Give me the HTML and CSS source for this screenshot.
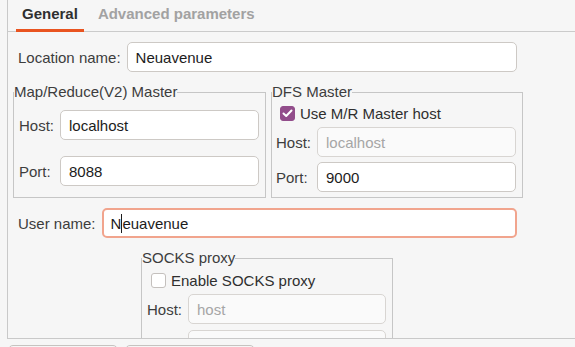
FILE: index.html
```html
<!DOCTYPE html>
<html lang="en">
<head>
    <meta charset="UTF-8">
    <title>Hadoop location</title>
    <link rel="stylesheet" href="styles.css">
</head>
<body>
    <div class="notebook">
        <div class="tabs">
            <div class="tab active">General</div>
            <div class="tab">Advanced parameters</div>
        </div>

        <div class="page">
            <div class="row">
                <label class="label">Location name:</label>
                <input class="entry wide" type="text" value="Neuavenue">
            </div>

            <div class="groups">
                <fieldset class="frame mr">
                    <legend>Map/Reduce(V2) Master</legend>
                    <div class="frame-body">
                        <div class="grid mr-grid">
                            <label class="label">Host:</label>
                            <input class="entry" type="text" value="localhost">
                            <label class="label">Port:</label>
                            <input class="entry" type="text" value="8088">
                        </div>
                    </div>
                </fieldset>

                <fieldset class="frame dfs">
                    <legend>DFS Master</legend>
                    <div class="frame-body">
                        <div class="check">
                            <span class="box checked">
                                <svg width="11" height="9" viewBox="0 0 11 9"><path d="M1.5 4.5 L4.2 7 L9.5 1.5" fill="none" stroke="#fff" stroke-width="2" stroke-linecap="round" stroke-linejoin="round"/></svg>
                            </span>
                            Use M/R Master host
                        </div>
                        <div class="grid dfs-grid">
                            <label class="label">Host:</label>
                            <input class="entry" type="text" value="localhost" disabled>
                            <label class="label">Port:</label>
                            <input class="entry" type="text" value="9000">
                        </div>
                    </div>
                </fieldset>
            </div>

            <div class="row user-row">
                <label class="label">User name:</label>
                <div class="entry wide focused">N<span class="caret"></span>euavenue</div>
            </div>

            <fieldset class="frame socks">
                <legend>SOCKS proxy</legend>
                <div class="frame-body">
                    <div class="check">
                        <span class="box"></span>
                        Enable SOCKS proxy
                    </div>
                    <div class="grid socks-grid">
                        <label class="label">Host:</label>
                        <input class="entry" type="text" value="host" disabled>
                        <label class="label">Port:</label>
                        <input class="entry" type="text" value="1080" disabled>
                    </div>
                </div>
            </fieldset>
        </div>
    </div>

    <div class="buttons">
        <button class="btn one"></button>
        <button class="btn two"></button>
    </div>
</body>
</html>
```

FILE: styles.css
```css
* {
    margin: 0;
    padding: 0;
    box-sizing: border-box;
}

body {
    background-color: #f6f6f6;
    font-family: 'Liberation Sans', Arial, sans-serif;
    font-size: 15px;
    color: #3d3d3d;
    height: 347px;
    overflow: hidden;
}

.notebook {
    margin-left: 7px;
    border-left: 1px solid #c9c9c9;
}

/* tab strip */
.tabs {
    display: flex;
    gap: 8px;
    height: 32px;
    padding-left: 8px;
    border-bottom: 1px solid #cbcbcb;
}

.tab {
    height: 32px;
    margin-bottom: -1px;
    padding: 5px 6px 0;
    line-height: 17px;
    font-weight: bold;
    color: #a2a2a2;
}

.tab.active {
    color: #2f2f2f;
    border-bottom: 3px solid #e95420;
}

/* page */
.page {
    height: 307px;
    padding: 10px 0 0 10px;
    border-bottom: 1px solid #c9c9c9;
    overflow: hidden;
}

.row {
    display: flex;
    align-items: center;
    gap: 6px;
    width: 499px;
}

.label {
    line-height: 17px;
    color: #3d3d3d;
}

.entry {
    height: 30px;
    padding: 0 8px;
    border: 1px solid #cdc9c5;
    border-radius: 5px;
    background: #fff;
    font-family: inherit;
    font-size: 15px;
    color: #1c1c1c;
    outline: none;
    min-width: 0;
}

.entry:disabled {
    background: #fafafa;
    border-color: #d8d5d2;
    color: #a6a6a6;
}

.wide {
    flex: 1;
}

/* frames */
.groups {
    display: flex;
    gap: 5px;
    margin: 11px 0 0 -5px;
}

.frame {
    border: 1px solid #c6c6c6;
}

.frame legend {
    line-height: 18px;
    color: #3d3d3d;
}

.mr {
    width: 253px;
}

.mr .frame-body {
    padding: 9px 6px 10px 5px;
}

.dfs {
    width: 252px;
}

.dfs .frame-body {
    padding: 4px 6px 5px 4px;
}

.grid {
    display: grid;
    grid-template-columns: auto 1fr;
    align-items: center;
    column-gap: 6px;
}

.mr-grid {
    row-gap: 16px;
}

.dfs-grid {
    row-gap: 5px;
    margin-top: 5px;
}

.check {
    display: flex;
    align-items: center;
    gap: 5px;
    line-height: 17px;
    margin-left: 4px;
    color: #2f2f2f;
}

.box {
    width: 15px;
    height: 15px;
    border: 1px solid #c4c0bd;
    border-radius: 3px;
    background: #fff;
    display: flex;
    align-items: center;
    justify-content: center;
}

.box.checked {
    background: #924d8b;
    border-color: #924d8b;
}

/* focused user name entry */
.user-row {
    margin-top: 10px;
}

.focused {
    display: flex;
    align-items: center;
    padding-left: 7px;
    border: 2px solid #f1a48d;
}

.caret {
    width: 1px;
    height: 19px;
    background: #1c1c1c;
}

.socks {
    width: 252px;
    margin: 11px 0 0 123px;
}

.socks .frame-body {
    padding: 5px 6px 0 5px;
}

.socks-grid {
    row-gap: 6px;
    margin-top: 5px;
}

/* dialog buttons, cut off by the window */
.buttons {
    display: flex;
    gap: 7px;
    margin: 6px 0 0 8px;
}

.btn {
    height: 34px;
    border: 1px solid #c6c3c0;
    border-radius: 5px;
    background: #f6f6f6;
}

.btn.one {
    width: 110px;
}

.btn.two {
    width: 130px;
}
```
